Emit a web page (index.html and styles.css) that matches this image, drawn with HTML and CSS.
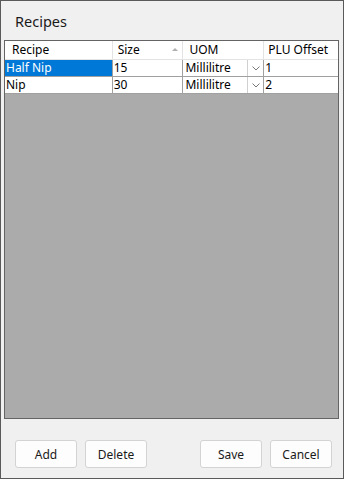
FILE: index.html
```html
<!DOCTYPE html>
<html>
<head>
<meta charset="utf-8">
<link rel="stylesheet" href="styles.css">
</head>
<body>
<div class="window">
  <div class="title">Recipes</div>
  <div class="grid">
    <div class="row header">
      <div class="cell c1 hc">Recipe</div>
      <div class="cell c2 hc">Size<span class="sort"></span></div>
      <div class="cell c3 hc">UOM</div>
      <div class="cell c4 hc">PLU Offset</div>
    </div>
    <div class="row data">
      <div class="cell c1 selected">Half Nip</div>
      <div class="cell c2">15</div>
      <div class="cell c3 combo"><span class="ctext">Millilitre</span><span class="cbtn"><svg width="8" height="5" viewBox="0 0 8 5"><path d="M0.5 0.5 L4 4 L7.5 0.5" fill="none" stroke="#7a7a7a" stroke-width="1"/></svg></span></div>
      <div class="cell c4">1</div>
    </div>
    <div class="row data">
      <div class="cell c1">Nip</div>
      <div class="cell c2">30</div>
      <div class="cell c3 combo"><span class="ctext">Millilitre</span><span class="cbtn"><svg width="8" height="5" viewBox="0 0 8 5"><path d="M0.5 0.5 L4 4 L7.5 0.5" fill="none" stroke="#7a7a7a" stroke-width="1"/></svg></span></div>
      <div class="cell c4">2</div>
    </div>
  </div>
  <div class="buttons">
    <div class="group">
      <button class="btn">Add</button>
      <button class="btn">Delete</button>
    </div>
    <div class="group">
      <button class="btn">Save</button>
      <button class="btn">Cancel</button>
    </div>
  </div>
</div>
</body>
</html>
```
FILE: styles.css
```css
html, body {
  margin: 0;
  padding: 0;
  background: #f0f0f0;
}
* { box-sizing: border-box; }
.window {
  width: 344px;
  height: 479px;
  border: 1px solid #5a5a5a;
  background: #f0f0f0;
  display: flex;
  flex-direction: column;
  font-family: "Noto Sans", "Open Sans", sans-serif;
  font-size: 12px;
  color: #000;
}
.title {
  height: 39px;
  padding: 10px 0 0 14px;
  font-size: 14.5px;
  color: #1a1a1a;
}
.grid {
  margin: 0 4px 0 3px;
  height: 379px;
  border: 1px solid #646464;
  background: #ababab;
  display: flex;
  flex-direction: column;
}
.row {
  display: flex;
  background: #fff;
}
.header {
  height: 19px;
  border-bottom: 1px solid #e3e3e3;
}
.data {
  height: 17px;
  border-bottom: 1px solid #a0a0a0;
}
.cell {
  border-right: 1px solid #a0a0a0;
  line-height: 16px;
  padding-left: 1px;
  white-space: nowrap;
  overflow: hidden;
  position: relative;
}
.hc {
  border-right: 1px solid #e3e3e3;
  line-height: 18px;
  padding-left: 7px;
}
.c1 { width: 108px; }
.c2 { width: 71px; }
.c3 { width: 81px; }
.c4 { width: 74px; border-right: none; }
.header .c2 { padding-left: 5px; }
.header .c3 { padding-left: 6px; }
.header .c4 { padding-left: 4px; }
.selected {
  background: #0078d7;
  color: #fff;
}
.sort {
  position: absolute;
  right: 4px;
  top: 7px;
  width: 0;
  height: 0;
  border-left: 3px solid transparent;
  border-right: 3px solid transparent;
  border-bottom: 3px solid #b0b0b0;
}
.combo {
  display: flex;
  padding-left: 0;
}
.ctext {
  width: 65px;
  padding-left: 2px;
  border-right: 1px solid #d0d0d0;
}
.cbtn {
  flex: 1;
  display: flex;
  align-items: center;
  justify-content: center;
}
.buttons {
  display: flex;
  justify-content: space-between;
  padding: 21px 11px 0 14px;
}
.group {
  display: flex;
  gap: 8px;
}
.btn {
  width: 62px;
  height: 28px;
  background: #fdfdfd;
  border: 1px solid #d3d3d3;
  border-radius: 3px;
  font-family: "Noto Sans", "Open Sans", sans-serif;
  font-size: 12px;
  color: #1a1a1a;
  padding: 0;
}
```
